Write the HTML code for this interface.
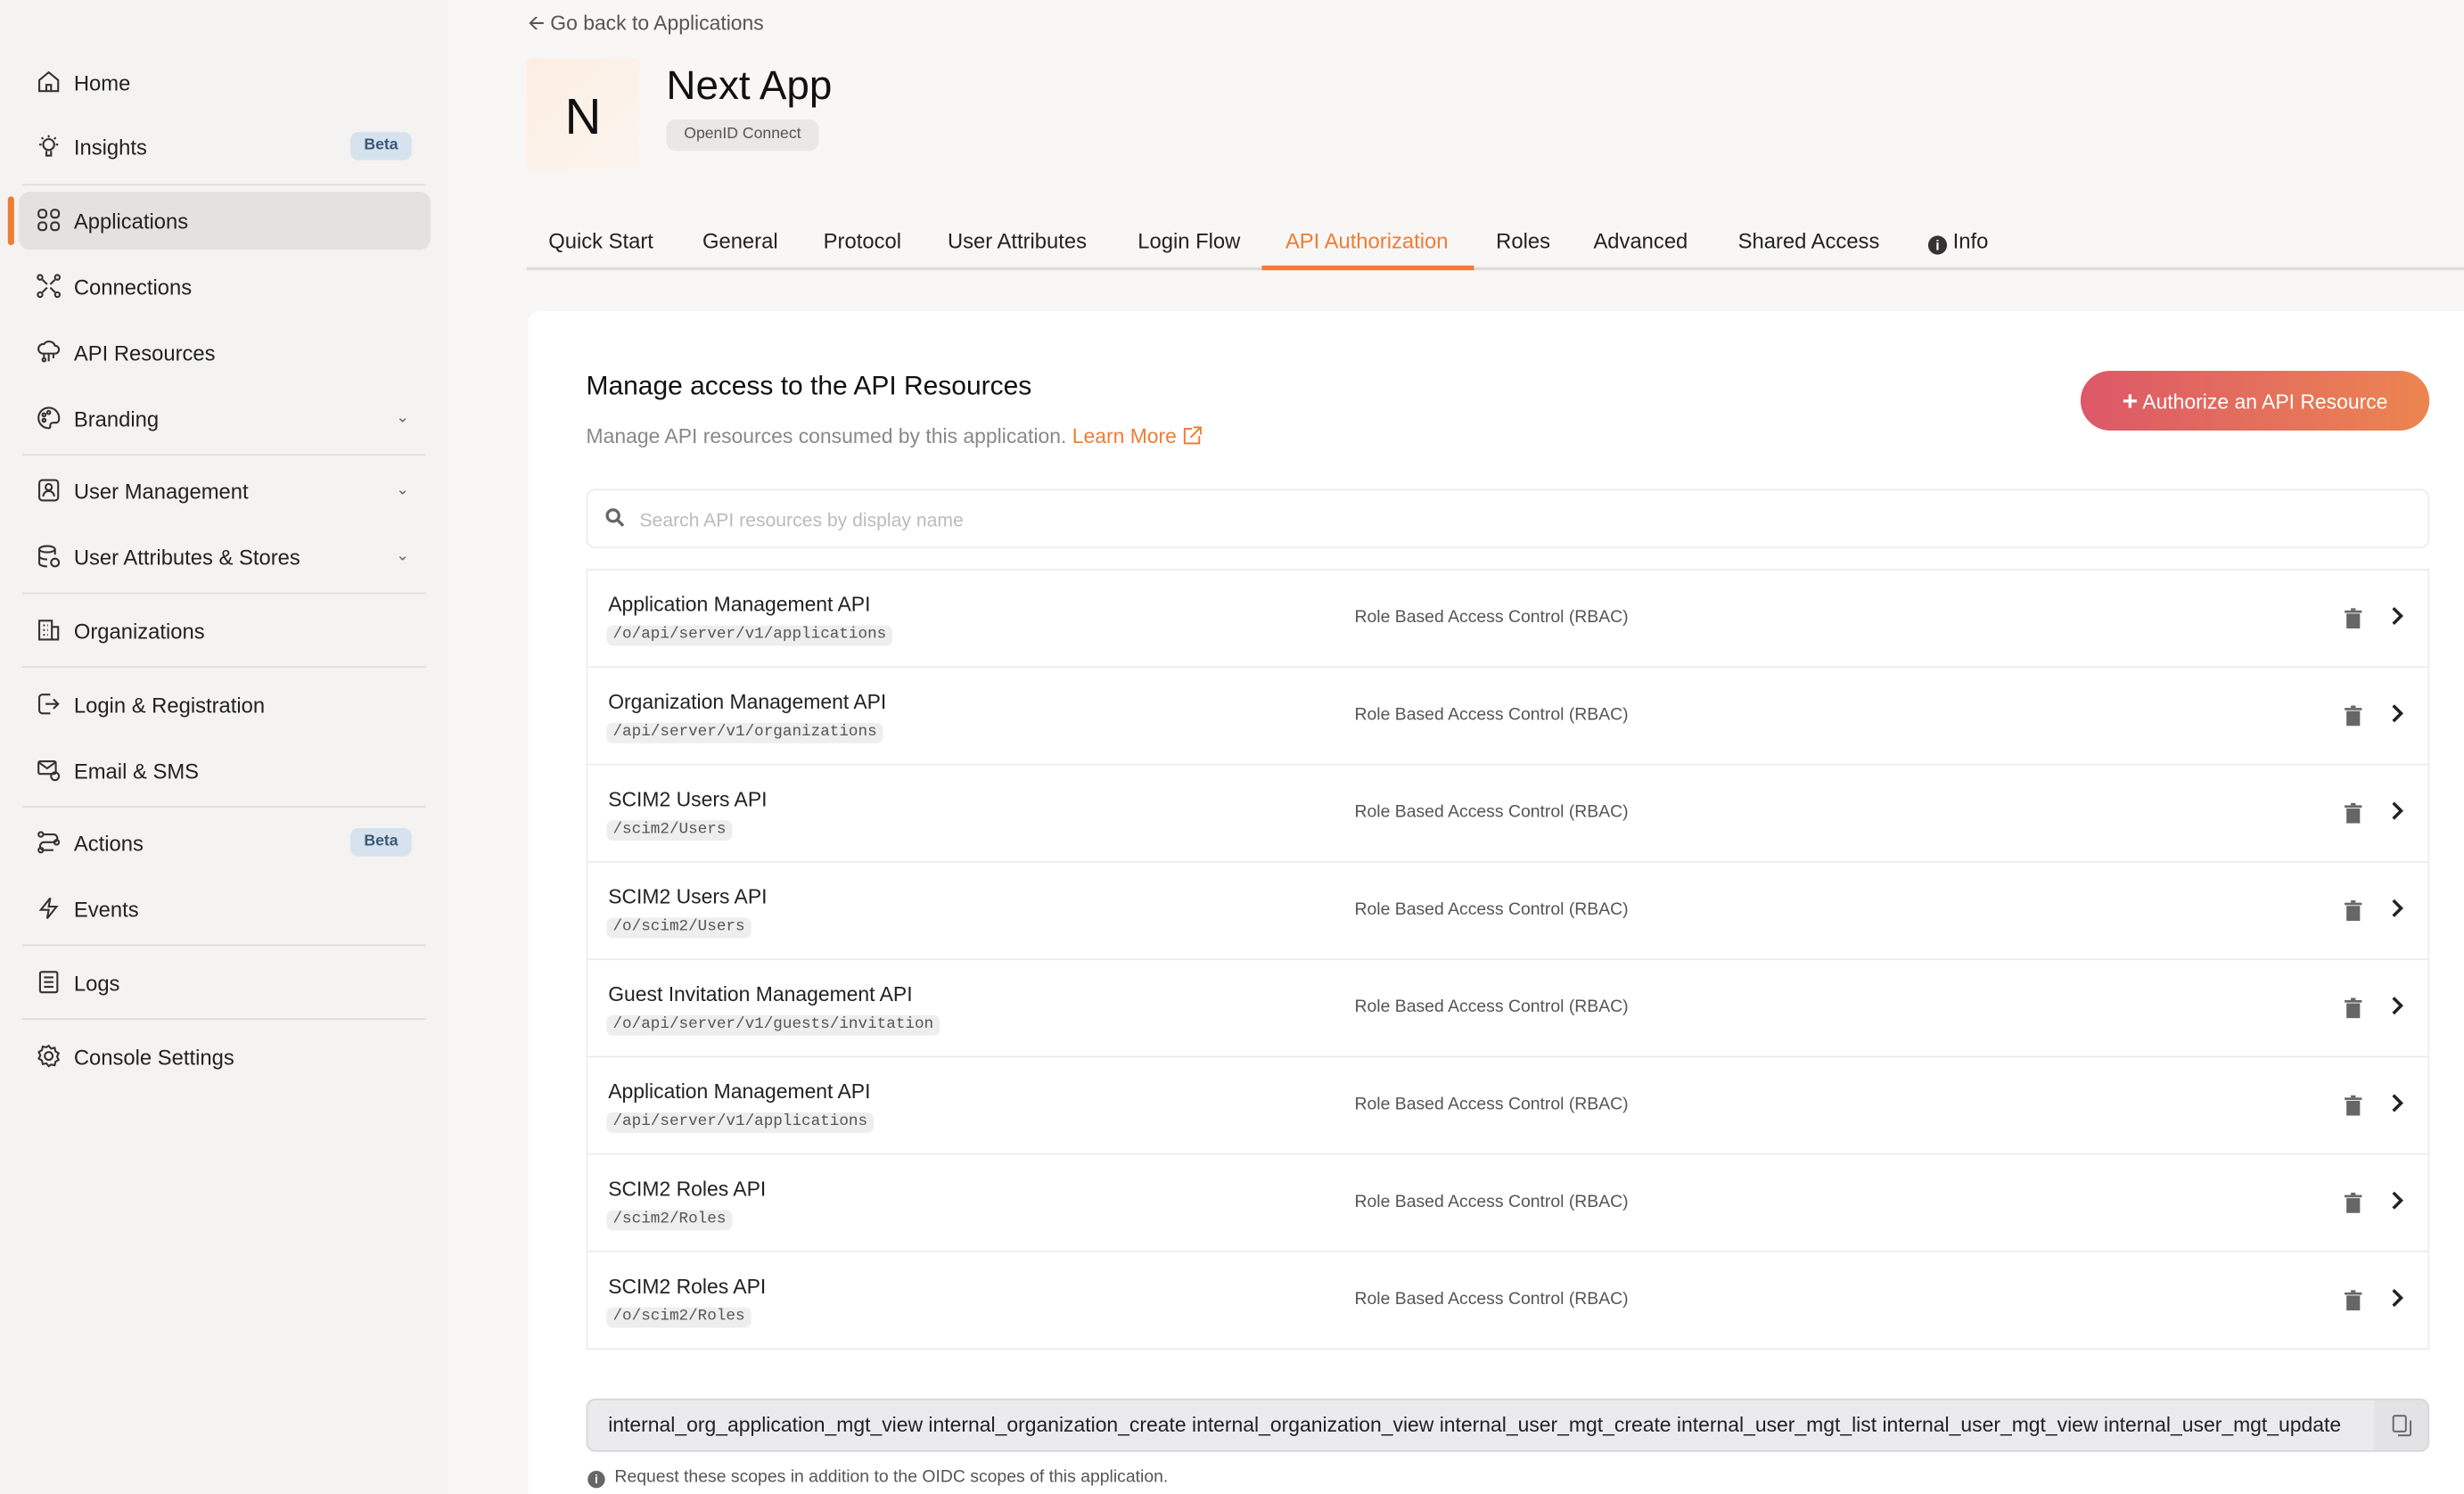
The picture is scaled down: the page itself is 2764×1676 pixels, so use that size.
<!DOCTYPE html>
<html><head><meta charset="utf-8"><style>
*{box-sizing:border-box;margin:0;padding:0}
html,body{width:2764px;height:1676px;overflow:hidden;background:#f8f7f6}
#w{width:1568px;height:951px;transform:scale(1.76276);transform-origin:0 0;position:relative;font-family:"Liberation Sans",sans-serif;color:#222}
.a{position:absolute;white-space:nowrap}
#sb{position:absolute;left:0;top:0;width:285px;height:951px;background:#f4f3f2}
.it{position:absolute;left:47px;font-size:13.5px;color:#222;transform:translateY(-50%)}
.ic{position:absolute;left:23px;width:16px;height:16px;transform:translateY(-50%)}
.dv{position:absolute;left:14px;width:257px;height:1px;background:#dedddc}
.beta{position:absolute;left:223px;width:39px;height:18px;border-radius:5px;background:#d6e3ee;color:#3b5a78;font-size:10px;font-weight:bold;text-align:center;line-height:18px;transform:translateY(-50%)}
.chev{position:absolute;left:252px;font-size:10px;color:#666;transform:translateY(-50%)}
.tab{position:absolute;top:146px;font-size:13.5px;color:#222}
.row{position:absolute;left:373px;width:1173px;height:62px;border-bottom:1px solid #ececec}
.nm{position:absolute;left:14px;top:14px;font-size:13px;color:#222}
.pt{position:absolute;left:13px;top:35px;font-family:"Liberation Mono",monospace;font-size:10px;color:#555;background:#eeeeef;border-radius:4px;padding:1px 4px}
.rb{position:absolute;left:489px;top:24px;font-size:11px;color:#555}
.tr{position:absolute;left:1119px;top:24px}
.cv{position:absolute;left:1148px;top:22px}
</style></head><body><div id="w">
<div id="sb">
<svg class="ic" style="top:52px" viewBox="0 0 16 16" fill="none" stroke="#333" stroke-width="1.2"><path d="M2 7L8 2l6 5v7H2z M6.5 14V10h3v4"/></svg><div class="it" style="top:53px">Home</div>
<svg class="ic" style="top:93px" viewBox="0 0 16 16" fill="none" stroke="#333" stroke-width="1.2"><circle cx="8" cy="7" r="3.5"/><path d="M6.5 11v3h3v-3M8 1v1.5M2 7h1.5M12.5 7H14M3.5 2.5l1 1M12.5 2.5l-1 1"/></svg><div class="it" style="top:94px">Insights</div><div class="beta" style="top:93px">Beta</div>
<div class="dv" style="top:117px"></div>
<div class="a" style="left:12px;top:122px;width:262px;height:37px;background:#e3e2e1;border-radius:7px"></div>
<div class="a" style="left:5px;top:125px;width:4px;height:31px;background:#f07c36;border-radius:2px"></div>
<svg class="ic" style="top:140px" viewBox="0 0 16 16" fill="none" stroke="#333" stroke-width="1.2"><rect x="1.5" y="1.5" width="5" height="5" rx="2"/><rect x="9.5" y="1.5" width="5" height="5" rx="2"/><rect x="1.5" y="9.5" width="5" height="5" rx="2"/><rect x="9.5" y="9.5" width="5" height="5" rx="2"/></svg><div class="it" style="top:141px">Applications</div>
<svg class="ic" style="top:182px" viewBox="0 0 16 16" fill="none" stroke="#333" stroke-width="1.2"><circle cx="2.5" cy="2.5" r="1.5"/><circle cx="13.5" cy="2.5" r="1.5"/><circle cx="2.5" cy="13.5" r="1.5"/><circle cx="13.5" cy="13.5" r="1.5"/><path d="M4 4l3 3M12 4l-3 3M4 12l3-3M12 12l-3-3"/></svg><div class="it" style="top:183px">Connections</div>
<svg class="ic" style="top:224px" viewBox="0 0 16 16" fill="none" stroke="#333" stroke-width="1.2"><path d="M4 9a3 3 0 0 1 1-6 4 4 0 0 1 7 1 2.5 2.5 0 0 1 0 5H4zM5 9v3M8 9v5M11 9v3"/><circle cx="5" cy="13" r="1"/></svg><div class="it" style="top:225px">API Resources</div>
<svg class="ic" style="top:266px" viewBox="0 0 16 16" fill="none" stroke="#333" stroke-width="1.2"><path d="M8 1.5a6.5 6.5 0 0 0 0 13c1 0 1-1 1-2s1-1.5 2-1.5h2a2 2 0 0 0 1.5-2A6.5 6.5 0 0 0 8 1.5z"/><circle cx="5" cy="6" r="1"/><circle cx="8" cy="4.5" r="1"/><circle cx="5" cy="9.5" r="1"/></svg><div class="it" style="top:267px">Branding</div><div class="chev" style="top:266px">&#8964;</div>
<div class="dv" style="top:289px"></div>
<svg class="ic" style="top:312px" viewBox="0 0 16 16" fill="none" stroke="#333" stroke-width="1.2"><rect x="2" y="1.5" width="12" height="13" rx="2"/><circle cx="8" cy="6" r="2"/><path d="M4.5 12a3.5 3.5 0 0 1 7 0"/></svg><div class="it" style="top:313px">User Management</div><div class="chev" style="top:312px">&#8964;</div>
<svg class="ic" style="top:354px" viewBox="0 0 16 16" fill="none" stroke="#333" stroke-width="1.2"><ellipse cx="7" cy="3.5" rx="5" ry="2"/><path d="M2 3.5v9c0 1 2 2 5 2M12 3.5V7M2 8c0 1 2 2 5 2"/><circle cx="12" cy="12" r="2.5"/></svg><div class="it" style="top:355px">User Attributes &amp; Stores</div><div class="chev" style="top:354px">&#8964;</div>
<div class="dv" style="top:377px"></div>
<svg class="ic" style="top:401px" viewBox="0 0 16 16" fill="none" stroke="#333" stroke-width="1.2"><rect x="2" y="2" width="8" height="12"/><path d="M10 6h4v8h-4M4.5 5h1M7 5h.5M4.5 8h1M7 8h.5M4.5 11h1M7 11h.5"/></svg><div class="it" style="top:402px">Organizations</div>
<div class="dv" style="top:424px"></div>
<svg class="ic" style="top:448px" viewBox="0 0 16 16" fill="none" stroke="#333" stroke-width="1.2"><path d="M9 2H4a2 2 0 0 0-2 2v8a2 2 0 0 0 2 2h5M6 8h8M11 5l3 3-3 3"/></svg><div class="it" style="top:449px">Login &amp; Registration</div>
<svg class="ic" style="top:490px" viewBox="0 0 16 16" fill="none" stroke="#333" stroke-width="1.2"><rect x="1.5" y="2.5" width="11" height="8" rx="1"/><path d="M1.5 3l5.5 4 5.5-4"/><circle cx="12" cy="12" r="2.5"/></svg><div class="it" style="top:491px">Email &amp; SMS</div>
<div class="dv" style="top:513px"></div>
<svg class="ic" style="top:536px" viewBox="0 0 16 16" fill="none" stroke="#333" stroke-width="1.2"><circle cx="3" cy="3" r="1.5"/><circle cx="13" cy="8" r="1.5"/><circle cx="3" cy="13" r="1.5"/><path d="M4.5 3H11a2.5 2.5 0 0 1 0 5H5a2.5 2.5 0 0 0 0 5h6"/></svg><div class="it" style="top:537px">Actions</div><div class="beta" style="top:536px">Beta</div>
<svg class="ic" style="top:578px" viewBox="0 0 16 16" fill="none" stroke="#333" stroke-width="1.2"><path d="M9 1.5L3 9h5l-1 5.5L13 7H8z"/></svg><div class="it" style="top:579px">Events</div>
<div class="dv" style="top:601px"></div>
<svg class="ic" style="top:625px" viewBox="0 0 16 16" fill="none" stroke="#333" stroke-width="1.2"><rect x="2.5" y="1.5" width="11" height="13" rx="1"/><path d="M5 5h6M5 8h6M5 11h6"/></svg><div class="it" style="top:626px">Logs</div>
<div class="dv" style="top:648px"></div>
<svg class="ic" style="top:672px" viewBox="0 0 16 16" fill="none" stroke="#333" stroke-width="1.2"><circle cx="8" cy="8" r="2.5"/><path d="M8 1.5l1.5 1.8 2.3-.5.5 2.3 2 1.2-1 2.1 1 2.1-2 1.2-.5 2.3-2.3-.5L8 14.5l-1.5-1.8-2.3.5-.5-2.3-2-1.2 1-2.1-1-2.1 2-1.2.5-2.3 2.3.5z"/></svg><div class="it" style="top:673px">Console Settings</div>
</div>

<div class="a" style="left:336px;top:6px;font-size:13px;color:#555">&#129128; Go back to Applications</div>
<div class="a" style="left:335px;top:37px;width:72px;height:72px;border-radius:4px;background:linear-gradient(135deg,#fdeee2,#fbf5ef);font-size:32px;text-align:center;line-height:74px;color:#111">N</div>
<div class="a" style="left:424px;top:39px;font-size:26px;color:#111">Next App</div>
<div class="a" style="left:424px;top:76px;width:97px;height:20px;border-radius:6px;background:#e9e8e7;font-size:10px;color:#555;text-align:center;line-height:20px">OpenID Connect</div>

<div class="tab" style="left:349px">Quick Start</div>
<div class="tab" style="left:447px">General</div>
<div class="tab" style="left:524px">Protocol</div>
<div class="tab" style="left:603px">User Attributes</div>
<div class="tab" style="left:724px">Login Flow</div>
<div class="tab" style="left:818px;color:#f07c36">API Authorization</div>
<div class="tab" style="left:952px">Roles</div>
<div class="tab" style="left:1014px">Advanced</div>
<div class="tab" style="left:1106px">Shared Access</div>
<div class="tab" style="left:1227px"><span style="display:inline-block;width:12px;height:12px;border-radius:6px;background:#333;color:#fff;font-size:9px;text-align:center;line-height:12px;font-weight:bold;vertical-align:-1px">i</span> Info</div>
<div class="a" style="left:335px;top:170px;width:1233px;height:2px;background:#dddcdb"></div>
<div class="a" style="left:803px;top:169px;width:135px;height:3px;background:#f07c36"></div>

<div class="a" style="left:336px;top:198px;width:1240px;height:760px;background:#fff;border-radius:8px"></div>
<div class="a" style="left:373px;top:236px;font-size:17px;color:#111">Manage access to the API Resources</div>
<div class="a" style="left:373px;top:270px;font-size:13px;color:#888">Manage API resources consumed by this application. <span style="color:#f07c36">Learn More</span> <svg width="13" height="13" viewBox="0 0 14 14" fill="none" stroke="#f07c36" stroke-width="1.2" style="vertical-align:-2px"><path d="M7 2H2v10h10V7M8 1h5v5M13 1L6 8"/></svg></div>
<div class="a" style="left:1324px;top:236px;width:222px;height:38px;border-radius:19px;background:linear-gradient(90deg,#dc5868,#ec8550);color:#fff;font-size:13px;line-height:39px;text-align:center"><b style="font-size:17px;vertical-align:-1px">+</b> Authorize an API Resource</div>
<div class="a" style="left:373px;top:311px;width:1173px;height:38px;border:1px solid #ececec;border-radius:6px"></div>
<svg class="a" style="left:385px;top:323px" width="13" height="13" viewBox="0 0 14 14" fill="none" stroke="#666" stroke-width="2"><circle cx="5.5" cy="5.5" r="4"/><path d="M8.5 8.5l4 4"/></svg>
<div class="a" style="left:407px;top:324px;font-size:12px;color:#bbb">Search API resources by display name</div>
<div class="a" style="left:373px;top:362px;width:1173px;height:1px;background:#ececec"></div>

<div class="row" style="top:363px"><div class="nm">Application Management API</div><div class="pt">/o/api/server/v1/applications</div><div class="rb">Role Based Access Control (RBAC)</div><svg class="tr" width="11" height="13" viewBox="0 0 11 13" fill="#666"><rect x="0" y="1.5" width="11" height="1.5"/><rect x="4" y="0" width="3" height="1.5"/><rect x="1.2" y="3.5" width="8.6" height="9.5"/></svg><svg class="cv" width="9" height="14" viewBox="0 0 9 14" fill="none" stroke="#222" stroke-width="2"><path d="M2 2l5 5-5 5"/></svg></div>
<div class="row" style="top:425px"><div class="nm">Organization Management API</div><div class="pt">/api/server/v1/organizations</div><div class="rb">Role Based Access Control (RBAC)</div><svg class="tr" width="11" height="13" viewBox="0 0 11 13" fill="#666"><rect x="0" y="1.5" width="11" height="1.5"/><rect x="4" y="0" width="3" height="1.5"/><rect x="1.2" y="3.5" width="8.6" height="9.5"/></svg><svg class="cv" width="9" height="14" viewBox="0 0 9 14" fill="none" stroke="#222" stroke-width="2"><path d="M2 2l5 5-5 5"/></svg></div>
<div class="row" style="top:487px"><div class="nm">SCIM2 Users API</div><div class="pt">/scim2/Users</div><div class="rb">Role Based Access Control (RBAC)</div><svg class="tr" width="11" height="13" viewBox="0 0 11 13" fill="#666"><rect x="0" y="1.5" width="11" height="1.5"/><rect x="4" y="0" width="3" height="1.5"/><rect x="1.2" y="3.5" width="8.6" height="9.5"/></svg><svg class="cv" width="9" height="14" viewBox="0 0 9 14" fill="none" stroke="#222" stroke-width="2"><path d="M2 2l5 5-5 5"/></svg></div>
<div class="row" style="top:549px"><div class="nm">SCIM2 Users API</div><div class="pt">/o/scim2/Users</div><div class="rb">Role Based Access Control (RBAC)</div><svg class="tr" width="11" height="13" viewBox="0 0 11 13" fill="#666"><rect x="0" y="1.5" width="11" height="1.5"/><rect x="4" y="0" width="3" height="1.5"/><rect x="1.2" y="3.5" width="8.6" height="9.5"/></svg><svg class="cv" width="9" height="14" viewBox="0 0 9 14" fill="none" stroke="#222" stroke-width="2"><path d="M2 2l5 5-5 5"/></svg></div>
<div class="row" style="top:611px"><div class="nm">Guest Invitation Management API</div><div class="pt">/o/api/server/v1/guests/invitation</div><div class="rb">Role Based Access Control (RBAC)</div><svg class="tr" width="11" height="13" viewBox="0 0 11 13" fill="#666"><rect x="0" y="1.5" width="11" height="1.5"/><rect x="4" y="0" width="3" height="1.5"/><rect x="1.2" y="3.5" width="8.6" height="9.5"/></svg><svg class="cv" width="9" height="14" viewBox="0 0 9 14" fill="none" stroke="#222" stroke-width="2"><path d="M2 2l5 5-5 5"/></svg></div>
<div class="row" style="top:673px"><div class="nm">Application Management API</div><div class="pt">/api/server/v1/applications</div><div class="rb">Role Based Access Control (RBAC)</div><svg class="tr" width="11" height="13" viewBox="0 0 11 13" fill="#666"><rect x="0" y="1.5" width="11" height="1.5"/><rect x="4" y="0" width="3" height="1.5"/><rect x="1.2" y="3.5" width="8.6" height="9.5"/></svg><svg class="cv" width="9" height="14" viewBox="0 0 9 14" fill="none" stroke="#222" stroke-width="2"><path d="M2 2l5 5-5 5"/></svg></div>
<div class="row" style="top:735px"><div class="nm">SCIM2 Roles API</div><div class="pt">/scim2/Roles</div><div class="rb">Role Based Access Control (RBAC)</div><svg class="tr" width="11" height="13" viewBox="0 0 11 13" fill="#666"><rect x="0" y="1.5" width="11" height="1.5"/><rect x="4" y="0" width="3" height="1.5"/><rect x="1.2" y="3.5" width="8.6" height="9.5"/></svg><svg class="cv" width="9" height="14" viewBox="0 0 9 14" fill="none" stroke="#222" stroke-width="2"><path d="M2 2l5 5-5 5"/></svg></div>
<div class="row" style="top:797px"><div class="nm">SCIM2 Roles API</div><div class="pt">/o/scim2/Roles</div><div class="rb">Role Based Access Control (RBAC)</div><svg class="tr" width="11" height="13" viewBox="0 0 11 13" fill="#666"><rect x="0" y="1.5" width="11" height="1.5"/><rect x="4" y="0" width="3" height="1.5"/><rect x="1.2" y="3.5" width="8.6" height="9.5"/></svg><svg class="cv" width="9" height="14" viewBox="0 0 9 14" fill="none" stroke="#222" stroke-width="2"><path d="M2 2l5 5-5 5"/></svg></div>
<div class="a" style="left:373px;top:363px;width:1px;height:495px;background:#ececec"></div>
<div class="a" style="left:1545px;top:363px;width:1px;height:495px;background:#ececec"></div>

<div class="a" style="left:373px;top:890px;width:1173px;height:34px;border:1px solid #d6d6d8;border-radius:6px;background:#ebebee;overflow:hidden">
<div class="a" style="left:13px;top:8px;width:1112px;overflow:hidden;font-size:13px;color:#222">internal_org_application_mgt_view internal_organization_create internal_organization_view internal_user_mgt_create internal_user_mgt_list internal_user_mgt_view internal_user_mgt_update</div>
<div class="a" style="left:1137px;top:0;width:36px;height:34px;background:#e3e3e6"></div>
<svg class="a" style="left:1148px;top:9px" width="13" height="15" viewBox="0 0 13 15" fill="none" stroke="#666" stroke-width="1.1"><rect x="1" y="1" width="8" height="10" rx="1"/><path d="M4 13.5h7a1 1 0 0 0 1-1V4"/></svg>
</div>
<div class="a" style="left:374px;top:934px;font-size:11px;color:#555"><span style="display:inline-block;width:11px;height:11px;border-radius:6px;background:#666;color:#fff;font-size:8px;text-align:center;line-height:11px;font-weight:bold;vertical-align:-1px">i</span>&nbsp; Request these scopes in addition to the OIDC scopes of this application.</div>
</div></body></html>
